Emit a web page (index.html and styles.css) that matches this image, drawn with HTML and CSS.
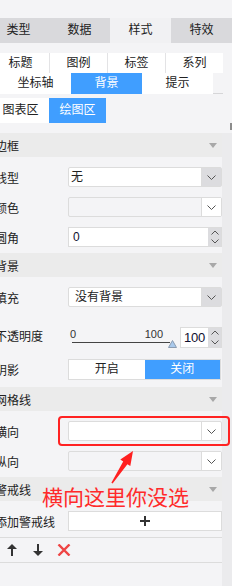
FILE: index.html
```html
<!DOCTYPE html>
<html lang="zh">
<head>
<meta charset="utf-8">
<link rel="stylesheet" href="styles.css">
</head>
<body>
<div class="panel">
  <div class="top"></div>
  <div class="tabs">
    <div class="tab">类型</div>
    <div class="tab">数据</div>
    <div class="tab active">样式</div>
    <div class="tab">特效</div>
  </div>
  <div class="sub">
    <div class="row-a">
      <div class="btn">标题</div>
      <div class="btn">图例</div>
      <div class="btn">标签</div>
      <div class="btn">系列</div>
    </div>
    <div class="row-b">
      <div class="btn">坐标轴</div>
      <div class="btn on">背景</div>
      <div class="btn">提示</div>
    </div>
    <div class="row-c">
      <div class="btn">图表区</div>
      <div class="btn on">绘图区</div>
    </div>
  </div>
  <div class="scroll">
    <div class="content">
      <div class="sec-h"><span>边框</span><i class="tri"></i></div>
      <div class="sec-b">
        <div class="f"><label>线型</label>
          <div class="ctl sel"><span class="val">无</span><span class="arr gray"><svg width="9" height="5" viewBox="0 0 9 5"><polyline points="0.5,0.5 4.5,4.5 8.5,0.5" fill="none" stroke="#555" stroke-width="1"/></svg></span></div>
        </div>
        <div class="f"><label>颜色</label>
          <div class="ctl sel dis"><span class="val"></span><span class="arr"><svg width="9" height="5" viewBox="0 0 9 5"><polyline points="0.5,0.5 4.5,4.5 8.5,0.5" fill="none" stroke="#555" stroke-width="1"/></svg></span></div>
        </div>
        <div class="f"><label>圆角</label>
          <div class="ctl num"><span class="val">0</span><span class="spin"><svg width="8" height="5" viewBox="0 0 8 5"><polyline points="0.5,4.5 4,1 7.5,4.5" fill="none" stroke="#555" stroke-width="1"/></svg><svg width="8" height="5" viewBox="0 0 8 5"><polyline points="0.5,0.5 4,4 7.5,0.5" fill="none" stroke="#555" stroke-width="1"/></svg></span></div>
        </div>
      </div>

      <div class="sec-h"><span>背景</span><i class="tri"></i></div>
      <div class="sec-b b7">
        <div class="f"><label>填充</label>
          <div class="ctl sel"><span class="val pad6">没有背景</span><span class="arr gray"><svg width="9" height="5" viewBox="0 0 9 5"><polyline points="0.5,0.5 4.5,4.5 8.5,0.5" fill="none" stroke="#555" stroke-width="1"/></svg></span></div>
        </div>
        <div class="f tall"><label>不透明度</label>
          <div class="slider">
            <div class="sl-labels"><span>0</span><span>100</span></div>
            <div class="track"></div>
            <svg class="thumb" width="9" height="8" viewBox="0 0 9 8"><polygon points="4.5,0.5 8.5,7.5 0.5,7.5" fill="#a9c9ec" stroke="#8a9bb0" stroke-width="1"/></svg>
          </div>
          <div class="num small"><span class="val big">100</span><span class="spin"><svg width="8" height="5" viewBox="0 0 8 5"><polyline points="0.5,4.5 4,1 7.5,4.5" fill="none" stroke="#555" stroke-width="1"/></svg><svg width="8" height="5" viewBox="0 0 8 5"><polyline points="0.5,0.5 4,4 7.5,0.5" fill="none" stroke="#555" stroke-width="1"/></svg></span></div>
        </div>
        <div class="f tog-row"><label>阴影</label>
          <div class="tog"><span>开启</span><span class="on">关闭</span></div>
        </div>
      </div>

      <div class="sec-h"><span>网格线</span><i class="tri"></i></div>
      <div class="sec-b">
        <div class="f"><label>横向</label>
          <div class="ctl sel"><span class="val"></span><span class="arr"><svg width="9" height="5" viewBox="0 0 9 5"><polyline points="0.5,0.5 4.5,4.5 8.5,0.5" fill="none" stroke="#555" stroke-width="1"/></svg></span></div>
        </div>
        <div class="f"><label>纵向</label>
          <div class="ctl sel dis"><span class="val"></span><span class="arr"><svg width="9" height="5" viewBox="0 0 9 5"><polyline points="0.5,0.5 4.5,4.5 8.5,0.5" fill="none" stroke="#555" stroke-width="1"/></svg></span></div>
        </div>
      </div>

      <div class="sec-h"><span>警戒线</span><i class="tri"></i></div>
      <div class="sec-b b0">
        <div class="f"><label>添加警戒线</label>
          <div class="ctl addbtn"><svg width="10" height="10" viewBox="0 0 10 10"><path d="M5 0V10M0 5H10" stroke="#333" stroke-width="2"/></svg></div>
        </div>
        <div class="tools">
          <svg class="ic up" width="10" height="12" viewBox="0 0 10 12"><polygon points="5,0 10,5 0,5" fill="#333"/><rect x="4" y="4" width="2" height="8" fill="#333"/></svg>
          <svg class="ic down" width="10" height="12" viewBox="0 0 10 12"><polygon points="5,12 10,7 0,7" fill="#333"/><rect x="4" y="0" width="2" height="8" fill="#333"/></svg>
          <svg class="ic del" width="14" height="12" viewBox="0 0 14 12"><path d="M1.5 0.5L12.5 11.5M12.5 0.5L1.5 11.5" stroke="#ee4444" stroke-width="2.4"/></svg>
        </div>
      </div>
    </div>
    <div class="sbar"><div class="sbar-mark"></div><div class="sbar-track"></div></div>
  </div>
</div>

<div class="anno-box"></div>
<svg class="anno-arrow" width="30" height="40" viewBox="108 448 30 40"><polygon points="133,451 130.3,466.1 127.4,464.2 112.6,483.6 111.4,482.8 123.2,461.4 120.3,459.5" fill="#ff2020"/></svg>
<div class="anno-text">横向这里你没选</div>
</body>
</html>
```
FILE: styles.css
```css
html, body {
  margin: 0;
  padding: 0;
}
body {
  width: 232px;
  height: 586px;
  overflow: hidden;
  position: relative;
  background: #f4f4f6;
  font-family: "Liberation Sans", "Noto Sans CJK SC", sans-serif;
  font-size: 12px;
  color: #222;
}
.panel {
  width: 244px;
  margin-left: -12px;
}
.top {
  height: 18px;
}
.tabs {
  display: flex;
  height: 25px;
}
.tab {
  width: 61px;
  line-height: 25px;
  text-align: center;
  background: #d9d9dc;
}
.tab.active {
  background: #f1f1f3;
}
.sub {
  padding: 10px 9px 0 4px;
}
.btn {
  background: #fff;
  text-align: center;
}
.btn.on {
  background: #409eff;
  color: #fff;
}
.row-a {
  display: flex;
  gap: 1px;
  height: 20px;
  background: #e3e3e5;
}
.row-a .btn {
  width: 57px;
  line-height: 20px;
}
.row-b {
  display: flex;
  height: 20px;
  padding-left: 8px;
  border-bottom: 1px solid #d6d6d8;
  margin-bottom: 4px;
}
.row-b .btn {
  width: 71px;
  height: 21px;
  line-height: 21px;
}
.row-c {
  display: flex;
  height: 25px;
}
.row-c .btn {
  width: 57px;
  line-height: 25px;
}
.scroll {
  display: flex;
  height: 463px;
}
.content {
  width: 230px;
  margin-left: 4px;
  padding-top: 10px;
}
.sbar {
  width: 10px;
  display: flex;
  flex-direction: column;
}
.sbar-mark {
  width: 2px;
  height: 7px;
  margin-left: 8px;
  background: #8c8c8c;
}
.sbar-track {
  flex: 1;
  margin-top: 3px;
  background: #ebebed;
}
.sec-h {
  height: 24px;
  background: #ebebeb;
  display: flex;
  align-items: center;
  justify-content: space-between;
  padding: 0 5px 0 3px;
}
.tri {
  width: 0;
  height: 0;
  border-left: 4px solid transparent;
  border-right: 4px solid transparent;
  border-top: 5px solid #a8a8a8;
}
.sec-b {
  padding-bottom: 6px;
}
.sec-b.b7 {
  padding-bottom: 7px;
}
.sec-b.b0 {
  padding-bottom: 0;
}
.f {
  display: flex;
  align-items: center;
  height: 20px;
  margin-top: 10px;
}
.f label {
  width: 73px;
  padding-left: 3px;
  white-space: nowrap;
}
.ctl {
  width: 154px;
  box-sizing: border-box;
}
.sel {
  display: flex;
  height: 20px;
  border: 1px solid #dcdcdc;
  border-radius: 2px;
  background: #fff;
}
.sel .val {
  flex: 1;
  padding-left: 2px;
  line-height: 18px;
}
.sel .val.pad6 {
  padding-left: 6px;
}
.arr {
  width: 19px;
  border-left: 1px solid #dcdcdc;
  display: flex;
  align-items: center;
  justify-content: center;
}
.arr.gray {
  background: #dcdcdf;
}
.sel.dis {
  background: #f4f4f6;
}
.sel.dis .arr {
  background: #fff;
}
.num {
  display: flex;
  height: 20px;
  border: 1px solid #dcdcdc;
  background: #fff;
}
.num .val {
  flex: 1;
  padding-left: 4px;
  line-height: 18px;
  color: #101030;
}
.num .val.big {
  font-size: 13px;
  padding-left: 3px;
  letter-spacing: -0.2px;
}
.spin {
  width: 13px;
  flex: none;
  background: #dcdcdf;
  display: flex;
  flex-direction: column;
  align-items: center;
  justify-content: space-around;
}
.f.tall {
  height: 21px;
  margin-top: 20px;
}
.f.tall label {
  line-height: 21px;
}
.slider {
  width: 110px;
  height: 21px;
  position: relative;
}
.sl-labels {
  display: flex;
  justify-content: space-between;
  font-size: 11px;
  line-height: 11px;
  padding: 2px 15px 0 2px;
  color: #333;
}
.track {
  position: absolute;
  left: 4px;
  top: 15px;
  width: 98px;
  height: 1px;
  background: #444;
}
.thumb {
  position: absolute;
  left: 100px;
  top: 13px;
}
.num.small {
  width: 42px;
  height: 21px;
  margin-left: 2px;
  box-sizing: border-box;
}
.num.small .val {
  line-height: 19px;
  overflow: hidden;
}
.tog-row {
  height: 21px;
  margin-top: 11px;
}
.tog {
  display: flex;
  width: 153px;
  height: 21px;
  box-sizing: border-box;
  border: 1px solid #dcdcdc;
  background: #fff;
}
.tog span {
  flex: 1;
  text-align: center;
  line-height: 19px;
}
.tog span.on {
  background: #409eff;
  color: #fff;
}
.addbtn {
  height: 20px;
  border: 1px solid #dcdcdc;
  background: #fff;
  display: flex;
  align-items: center;
  justify-content: center;
}
.tools {
  margin-top: 6px;
  height: 24px;
  border-top: 1px solid #dcdcdc;
  border-bottom: 1px solid #dcdcdc;
  display: flex;
  align-items: center;
}
.ic.up {
  margin-left: 15px;
}
.ic.down {
  margin-left: 16px;
}
.ic.del {
  margin-left: 14px;
}
.anno-box {
  position: absolute;
  left: 58px;
  top: 416px;
  width: 172px;
  height: 30px;
  box-sizing: border-box;
  border: 2px solid #ff2222;
  border-radius: 4px;
}
.anno-arrow {
  position: absolute;
  left: 108px;
  top: 448px;
}
.anno-text {
  position: absolute;
  left: 42px;
  top: 486px;
  font-family: "Noto Sans CJK SC", sans-serif;
  font-size: 21px;
  line-height: 21px;
  color: #ff2a2a;
  white-space: nowrap;
}
```
